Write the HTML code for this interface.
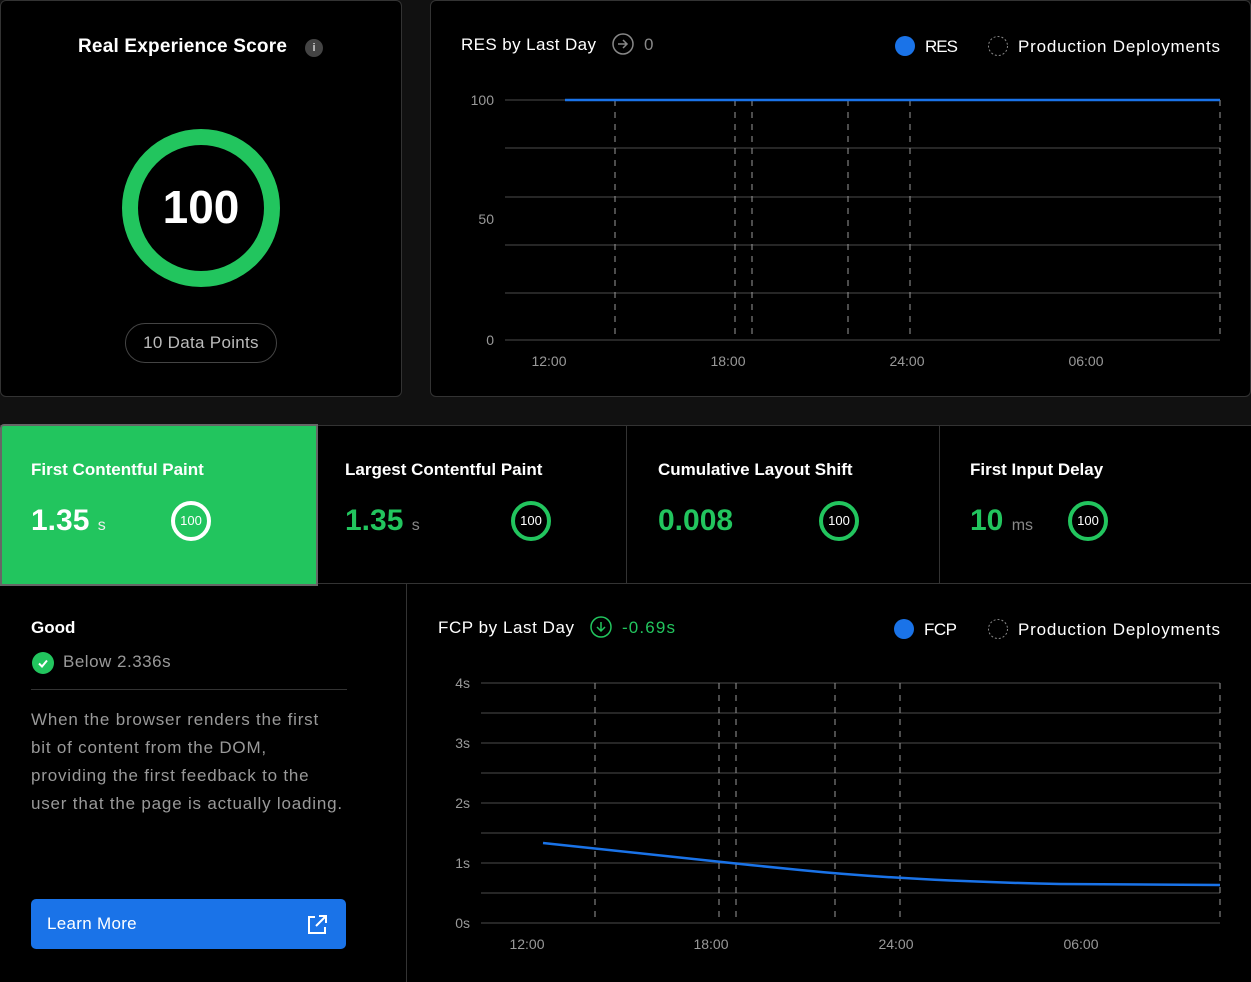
<!DOCTYPE html>
<html><head><meta charset="utf-8"><style>
*{margin:0;padding:0;box-sizing:border-box}
body{width:1251px;height:982px;background:#111;position:relative;overflow:hidden;font-family:"Liberation Sans",sans-serif;color:#fff}
.a{position:absolute}
.card{position:absolute;background:#000;border:1px solid #333;border-radius:6px}
.mt{font-size:17px;font-weight:bold;color:#fff;white-space:nowrap}
.val{font-size:30px;font-weight:bold;color:#22c55e;white-space:nowrap}
.unit{font-size:16px;color:#888;font-weight:normal}
.ring{position:absolute;width:40px;height:40px;border:4px solid #22c55e;border-radius:50%;font-size:13px;color:#fff;text-align:center;line-height:32px}
</style></head><body>
<div class="card" style="left:0;top:0;width:402px;height:397px"></div>
<div class="a" style="left:78px;top:36px;font-size:19px;font-weight:bold;letter-spacing:0.2px">Real Experience Score</div>
<div class="a" style="left:305px;top:39px;width:18px;height:18px;border-radius:50%;background:#444;color:#ccc;font-size:11px;font-weight:bold;text-align:center;line-height:18px">i</div>
<div class="a" style="left:122px;top:129px;width:158px;height:158px;border:16px solid #22c55e;border-radius:50%"></div>
<div class="a" style="left:122px;top:180px;width:158px;text-align:center;font-size:46px;font-weight:bold">100</div>
<div class="a" style="left:125px;top:323px;width:152px;height:40px;border:1px solid #444;border-radius:20px;text-align:center;line-height:38px;font-size:17px;color:#bbb;letter-spacing:0.3px">10 Data Points</div>

<div class="card" style="left:430px;top:0;width:821px;height:397px"></div>

<div class="a" style="left:0;top:425px;width:1251px;height:557px;background:#000;border-top:1px solid #333"></div>
<div class="a" style="left:626px;top:426px;width:1px;height:157px;background:#333"></div>
<div class="a" style="left:939px;top:426px;width:1px;height:157px;background:#333"></div>
<div class="a" style="left:0;top:583px;width:1251px;height:1px;background:#333"></div>
<div class="a" style="left:406px;top:584px;width:1px;height:398px;background:#333"></div>
<div class="a" style="left:0;top:424px;width:318px;height:162px;background:#22c55e;border:2px solid #666;border-radius:4px 0 0 0"></div>

<div class="a mt" style="left:31px;top:460px">First Contentful Paint</div>
<div class="a val" style="left:31px;top:504px;color:#fff">1.35 <span class="unit" style="color:#eee">s</span></div>
<div class="ring" style="left:171px;top:501px;border-color:#fff">100</div>
<div class="a mt" style="left:345px;top:460px">Largest Contentful Paint</div>
<div class="a val" style="left:345px;top:504px">1.35 <span class="unit">s</span></div>
<div class="ring" style="left:511px;top:501px">100</div>
<div class="a mt" style="left:658px;top:460px">Cumulative Layout Shift</div>
<div class="a val" style="left:658px;top:504px">0.008</div>
<div class="ring" style="left:819px;top:501px">100</div>
<div class="a mt" style="left:970px;top:460px">First Input Delay</div>
<div class="a val" style="left:970px;top:504px">10 <span class="unit">ms</span></div>
<div class="ring" style="left:1068px;top:501px">100</div>

<div class="a" style="left:31px;top:618px;font-size:17px;font-weight:bold">Good</div>
<div class="a" style="left:32px;top:652px;width:22px;height:22px;border-radius:50%;background:#22c55e"><svg width="22" height="22"><path d="M7 11.5l3 3 5-6" stroke="#fff" stroke-width="2" fill="none"/></svg></div>
<div class="a" style="left:63px;top:652px;font-size:17px;color:#999;letter-spacing:0.5px">Below 2.336s</div>
<div class="a" style="left:31px;top:689px;width:316px;height:1px;background:#333"></div>
<div class="a" style="left:31px;top:706px;font-size:17px;color:#999;line-height:28px;white-space:nowrap;letter-spacing:0.8px">When the browser renders the first<br>bit of content from the DOM,<br>providing the first feedback to the<br>user that the page is actually loading.</div>
<div class="a" style="left:31px;top:899px;width:315px;height:50px;background:#1a73e8;border-radius:5px;font-size:17px;line-height:50px;padding-left:16px;letter-spacing:0.3px">Learn More
<svg class="a" style="left:274px;top:14px" width="24" height="24" viewBox="0 0 24 24" fill="none" stroke="#fff" stroke-width="2"><path d="M10 4H4v16h16v-6M14 3h7v7M21 3l-10 10"/></svg></div>

<svg class="a" style="left:0;top:0" width="1251" height="982" font-family="Liberation Sans,sans-serif">
<g font-size="17" fill="#fff">
<text x="461" y="50" textLength="135">RES by Last Day</text>
<circle cx="623" cy="44" r="10" fill="none" stroke="#888" stroke-width="1.5"/><path d="M618 44h9M623 40l4 4-4 4" stroke="#888" fill="none" stroke-width="1.5"/>
<text x="644" y="50" fill="#888">0</text>
<circle cx="905" cy="46" r="10" fill="#1a73e8"/><text x="925" y="52" textLength="33">RES</text>
<circle cx="998" cy="46" r="9.5" fill="none" stroke="#888" stroke-dasharray="2 2"/><text x="1018" y="52" textLength="202">Production Deployments</text>

<text x="438" y="633" textLength="136">FCP by Last Day</text>
<circle cx="601" cy="627" r="10" fill="none" stroke="#22c55e" stroke-width="1.5"/><path d="M601 622v9M597 627l4 4 4-4" stroke="#22c55e" fill="none" stroke-width="1.5"/>
<text x="622" y="633" fill="#22c55e" textLength="53">-0.69s</text>
<circle cx="904" cy="629" r="10" fill="#1a73e8"/><text x="924" y="635" textLength="33">FCP</text>
<circle cx="998" cy="629" r="9.5" fill="none" stroke="#888" stroke-dasharray="2 2"/><text x="1018" y="635" textLength="202">Production Deployments</text>
</g>
<g stroke="#333" stroke-width="1.5">
<path d="M505 100H1220M505 148H1220M505 197H1220M505 245H1220M505 293H1220M505 340H1220"/>
<path d="M481 683H1220M481 713H1220M481 743H1220M481 773H1220M481 803H1220M481 833H1220M481 863H1220M481 893H1220M481 923H1220"/>
</g>
<g stroke="#999" stroke-dasharray="6 6" stroke-width="1">
<path d="M615 100V340M735 100V340M752 100V340M848 100V340M910 100V340M1220 100V340"/>
<path d="M595 683V923M719 683V923M736 683V923M835 683V923M900 683V923M1220 683V923"/>
</g>
<path d="M565 100H1220" stroke="#1a73e8" stroke-width="2.5"/>
<path d="M543 843C650 855 720 862 800 870S960 882 1060 884L1220 885" stroke="#1a73e8" stroke-width="2.5" fill="none"/>
<g font-size="14" fill="#999" text-anchor="end">
<text x="494" y="105">100</text><text x="494" y="224">50</text><text x="494" y="345">0</text>
<text x="470" y="688">4s</text><text x="470" y="748">3s</text><text x="470" y="808">2s</text><text x="470" y="868">1s</text><text x="470" y="928">0s</text>
</g>
<g font-size="14" fill="#999" text-anchor="middle">
<text x="549" y="366">12:00</text><text x="728" y="366">18:00</text><text x="907" y="366">24:00</text><text x="1086" y="366">06:00</text>
<text x="527" y="949">12:00</text><text x="711" y="949">18:00</text><text x="896" y="949">24:00</text><text x="1081" y="949">06:00</text>
</g>
</svg>
</body></html>
